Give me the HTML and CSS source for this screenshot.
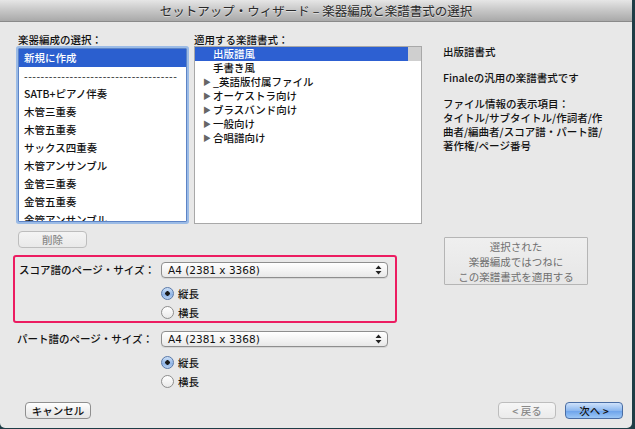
FILE: index.html
```html
<!DOCTYPE html>
<html lang="ja">
<head>
<meta charset="utf-8">
<link rel="stylesheet" href="styles.css">
</head>
<body>
<div class="window">
  <div class="titlebar">セットアップ・ウィザード – 楽器編成と楽譜書式の選択</div>
  <div class="content">
    <div class="top">
      <div class="col-left">
        <div class="label">楽器編成の選択：</div>
        <div class="list list-focus">
          <div class="row sel">新規に作成</div>
          <div class="row dashes">-------------------------------------</div>
          <div class="row">SATB+ピアノ伴奏</div>
          <div class="row">木管三重奏</div>
          <div class="row">木管五重奏</div>
          <div class="row">サックス四重奏</div>
          <div class="row">木管アンサンブル</div>
          <div class="row">金管三重奏</div>
          <div class="row">金管五重奏</div>
          <div class="row">金管アンサンブル</div>
        </div>
      </div>
      <div class="col-mid">
        <div class="label">適用する楽譜書式：</div>
        <div class="list list-plain">
          <div class="trow"><span class="tsel">出版譜風</span><span class="thumb"></span></div>
          <div class="trow"><span class="tri"></span>手書き風</div>
          <div class="trow"><span class="tri on">▶</span>_英語版付属ファイル</div>
          <div class="trow"><span class="tri on">▶</span>オーケストラ向け</div>
          <div class="trow"><span class="tri on">▶</span>ブラスバンド向け</div>
          <div class="trow"><span class="tri on">▶</span>一般向け</div>
          <div class="trow"><span class="tri on">▶</span>合唱譜向け</div>
        </div>
      </div>
      <div class="col-info">
        <p>出版譜書式</p>
        <p>Finaleの汎用の楽譜書式です</p>
        <p>ファイル情報の表示項目：<br>タイトル/サブタイトル/作詞者/作<br>曲者/編曲者/スコア譜・パート譜/<br>著作権/ページ番号</p>
      </div>
    </div>

    <div class="middle">
      <div class="mid-left">
        <button class="btn btn-delete">削除</button>
        <div class="pagebox highlight">
          <div class="prow">
            <span class="plabel">スコア譜のページ・サイズ：</span>
            <div class="popup">A4 (2381 x 3368)<svg class="arrows" width="7" height="10" viewBox="0 0 7 10"><path d="M3.5 0.5 L6.5 4 L0.5 4 Z M0.5 6 L6.5 6 L3.5 9.5 Z" fill="#222"/></svg></div>
          </div>
          <div class="radio-row"><span class="radio checked"></span>縦長</div>
          <div class="radio-row"><span class="radio"></span>横長</div>
        </div>
      </div>
      <button class="btn btn-apply">選択された<br>楽器編成ではつねに<br>この楽譜書式を適用する</button>
    </div>

    <div class="pagebox part">
      <div class="prow">
        <span class="plabel">パート譜のページ・サイズ：</span>
        <div class="popup">A4 (2381 x 3368)<svg class="arrows" width="7" height="10" viewBox="0 0 7 10"><path d="M3.5 0.5 L6.5 4 L0.5 4 Z M0.5 6 L6.5 6 L3.5 9.5 Z" fill="#222"/></svg></div>
      </div>
      <div class="radio-row"><span class="radio checked"></span>縦長</div>
      <div class="radio-row"><span class="radio"></span>横長</div>
    </div>

    <div class="footer">
      <button class="btn btn-cancel">キャンセル</button>
      <div class="nav">
        <button class="btn btn-back">&lt;&nbsp;戻る</button>
        <button class="btn btn-next">次へ&nbsp;&gt;</button>
      </div>
    </div>
  </div>
</div>
</body>
</html>
```

FILE: styles.css
```css
* { box-sizing: border-box; }
html, body { margin: 0; padding: 0; }
body {
  width: 635px;
  height: 429px;
  background: #1f3d46;
  font-family: "Noto Sans CJK JP", "Noto Sans", sans-serif;
  font-size: 10.5px;
  font-weight: 500;
  color: #111;
  overflow: hidden;
}
.window {
  width: 632px;
  height: 428px;
  background: #e8e8e8;
  border-radius: 0 0 5px 5px;
  overflow: hidden;
}
.titlebar {
  height: 22px;
  background: linear-gradient(#e6e6e6, #c9c9c9 45%, #a9a9a9);
  border-bottom: 1px solid #8a8a8a;
  text-align: center;
  font-size: 12.5px;
  font-weight: 400;
  line-height: 22px;
  color: #2a2a2a;
  text-shadow: 0 1px 0 rgba(255,255,255,0.5);
}
.content {
  padding: 11px 0 0 17px;
}
.top {
  display: flex;
  height: 191px;
}
.label {
  height: 13px;
  line-height: 13px;
}
.col-left { width: 170px; margin-left: 1px; }
.col-mid { width: 228px; margin-left: 6px; }
.col-info { margin-left: 21px; padding-top: 12px; }
.col-info p { margin: 0 0 12px; line-height: 14px; }
.list {
  background: #fff;
  overflow: hidden;
}
.list-focus {
  width: 169px;
  height: 174px;
  margin-top: 2px;
  border: 1px solid #5d84c6;
  box-shadow: 0 0 0 2px #9bbbe6;
  border-radius: 1px;
}
.row {
  height: 18px;
  line-height: 18px;
  padding-left: 5px;
  white-space: nowrap;
}
.row.sel { background: #2b5fcf; color: #fff; }
.dashes { letter-spacing: 0.5px; color: #222; font-weight: 400; }
.list-plain {
  width: 228px;
  height: 178px;
  border: 1px solid #a8a8a8;
}
.trow {
  height: 14px;
  line-height: 14px;
  display: flex;
  align-items: center;
  white-space: nowrap;
  overflow: hidden;
}
.tsel {
  width: 213px;
  height: 14px;
  background: #2d60d2;
  color: #fff;
  padding-left: 18px;
}
.thumb {
  width: 13px;
  height: 14px;
  background: #cfcfcf;
}
.tri {
  display: inline-block;
  width: 18px;
  padding-left: 8px;
  font-size: 8px;
  color: #666;
}
.middle {
  display: flex;
}
.mid-left { width: 385px; margin-left: -4px; }
.btn {
  font-family: inherit;
  font-size: 10.5px;
  font-weight: 500;
  margin: 0;
  padding: 0;
  border-radius: 4px;
  border: 1px solid #a3a3a3;
  background: linear-gradient(#ffffff, #f0f0f0 50%, #e4e4e4);
  color: #222;
  line-height: 15px;
  display: block;
}
.btn-delete {
  width: 69px;
  height: 17px;
  margin: 7px 0 0 5px;
  color: #8a8a8a;
  border-color: #bdbdbd;
  background: linear-gradient(#f4f4f4, #e9e9e9);
}
.pagebox {
  display: grid;
  grid-template-columns: 142px 227px;
  padding: 5px 0 0 4px;
}
.highlight {
  margin-top: 7px;
  width: 384px;
  height: 68px;
  border: 2px solid #ec1c61;
  border-radius: 3px;
}
.prow { display: contents; }
.plabel { line-height: 16px; height: 16px; white-space: nowrap; }
.popup {
  position: relative;
  height: 16px;
  line-height: 14px;
  padding-left: 6px;
  border: 1px solid #8e8e8e;
  border-radius: 4px;
  background: linear-gradient(#ffffff, #f4f4f4 50%, #e8e8e8);
  box-shadow: 0 1px 0 rgba(0,0,0,0.08);
  font-family: "DejaVu Sans", "Noto Sans", sans-serif;
  font-size: 10.5px;
  font-weight: 400;
  color: #111;
}
.arrows { position: absolute; right: 5px; top: 2px; }
.radio-row {
  grid-column: 2;
  display: flex;
  align-items: center;
  height: 19px;
}
.pagebox .radio-row:nth-child(2) { margin-top: 6px; }
.radio {
  width: 13px;
  height: 13px;
  border-radius: 50%;
  border: 1px solid #8d8d8d;
  background: linear-gradient(#ffffff, #e9e9e9);
  margin-right: 4px;
}
.radio.checked {
  border-color: #5a79a8;
  background: radial-gradient(circle at 50% 50%, #1a1a1a 0 2px, transparent 2.5px), linear-gradient(#cde0f7, #8fb4e6 60%, #b9d2f2);
}
.btn-apply {
  width: 144px;
  height: 48px;
  margin: 13px 0 0 46px;
  border-radius: 1px;
  border-color: #b5b5b5;
  background: linear-gradient(#efefef, #e6e6e6);
  color: #6f6f6f;
  font-weight: 400;
  line-height: 15px;
}
.part {
  margin-top: 8px;
  padding-left: 0;
  padding-top: 0;
  grid-template-columns: 144px 227px;
}
.footer {
  display: flex;
  justify-content: space-between;
  margin-top: 11px;
  padding-left: 8px;
}
.btn-cancel {
  width: 66px;
  height: 17px;
  color: #111;
  border-color: #8f8f8f;
}
.nav { display: flex; gap: 9px; margin-right: 9px; }
.btn-back {
  width: 58px;
  height: 17px;
  color: #8a8a8a;
  border-color: #bdbdbd;
  background: linear-gradient(#f6f6f6, #ebebeb);
}
.btn-next {
  width: 58px;
  height: 17px;
  color: #111;
  border-color: #4a6da3;
  background: linear-gradient(#cfe2fb, #8db8ef 50%, #6aa1ea 51%, #9cc7f6);
}
```
